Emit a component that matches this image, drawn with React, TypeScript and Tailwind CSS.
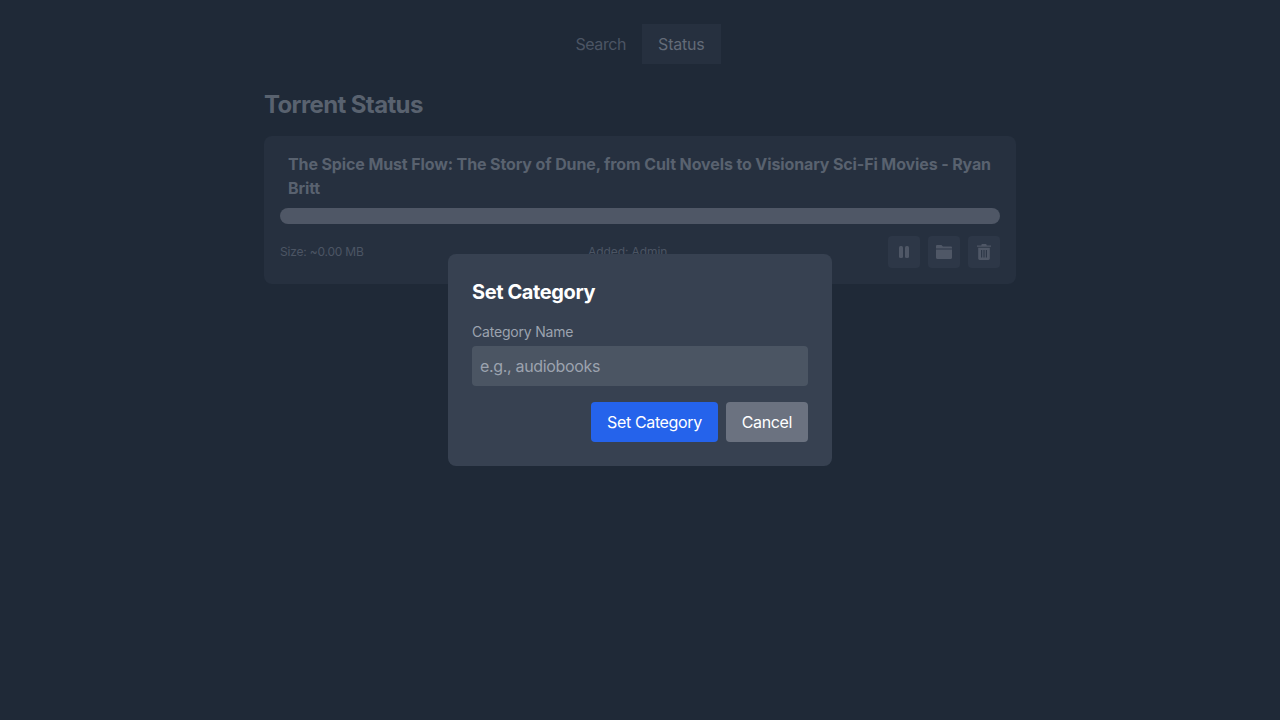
import React from 'react';

const PauseIcon = () => (
  <svg width="16" height="16" viewBox="0 0 16 16" fill="currentColor">
    <rect x="3" y="2" width="4" height="12" rx="1.5" />
    <rect x="9" y="2" width="4" height="12" rx="1.5" />
  </svg>
);

const FolderIcon = () => (
  <svg width="16" height="16" viewBox="0 0 16 16" fill="currentColor">
    <path d="M0 2.2C0 1.5.5 1 1.2 1h4.2l1.6 1.6h7.8c.7 0 1.2.5 1.2 1.2V4.4H0z" />
    <path d="M0 5.4h16v8.4c0 .7-.5 1.2-1.2 1.2H1.2C.5 15 0 14.5 0 13.8z" />
  </svg>
);

const TrashIcon = () => (
  <svg width="16" height="16" viewBox="0 0 16 16" fill="currentColor">
    <path d="M5.8 0h4.4l.6 1.4H15v1.4H1V1.4h4.2z" />
    <path fillRule="evenodd" d="M2.2 3.8h11.6V14.6c0 .8-.6 1.4-1.4 1.4H3.6c-.8 0-1.4-.6-1.4-1.4zM5 6v7.6h1.2V6zm2.4 0v7.6h1.2V6zm2.4 0v7.6H11V6z" />
  </svg>
);

export default function App() {
  return (
    <div className="min-h-screen bg-[#1f2937] font-['Inter',sans-serif]">
      <nav className="flex justify-center pt-6">
        <button className="h-10 px-4 text-base tracking-[-0.4px] text-[#4c5564]">Search</button>
        <button className="h-10 px-4 text-base tracking-[-0.2px] text-[#636b78] bg-[#26303f]">Status</button>
      </nav>

      <main className="w-[752px] mx-auto mt-6">
        <h1 className="text-2xl font-bold tracking-[-0.62px] leading-[34px] text-[#59626f] h-8 mb-4">Torrent Status</h1>

        <div className="bg-[#26303f] rounded-lg p-4">
          <h2 className="px-2 text-base font-bold tracking-[-0.12px] text-[#59626f]">
            The Spice Must Flow: The Story of Dune, from Cult Novels to Visionary Sci-Fi Movies - Ryan Britt
          </h2>
          <div className="h-4 mt-2 rounded-full bg-[#4f5766]" />
          <div className="grid grid-cols-3 items-center mt-3 text-xs text-[#4c5564]">
            <span className="tracking-[-0.2px]">Size: ~0.00 MB</span>
            <span className="ml-[68px] tracking-[-0.08px]">Added: Admin</span>
            <div className="flex justify-end gap-2 text-[#4f5766]">
              <button className="w-8 h-8 flex items-center justify-center rounded bg-[#2d3747]"><PauseIcon /></button>
              <button className="w-8 h-8 flex items-center justify-center rounded bg-[#2d3747]"><FolderIcon /></button>
              <button className="w-8 h-8 flex items-center justify-center rounded bg-[#2d3747]"><TrashIcon /></button>
            </div>
          </div>
        </div>
      </main>

      {/* modal overlay */}
      <div className="fixed inset-0 backdrop-blur-[0.5px] flex items-center justify-center">
        <div className="w-96 bg-[#374151] rounded-lg p-6">
          <h3 className="text-xl font-bold tracking-[-0.4px] text-white mb-4">Set Category</h3>
          <label className="block text-sm tracking-[-0.2px] text-[#9ca3af] mb-1">Category Name</label>
          <input
            readOnly
            placeholder="e.g., audiobooks"
            className="w-full h-10 px-2 rounded bg-[#4b5563] text-base tracking-[-0.33px] text-white placeholder:text-[#9ca3af] outline-none"
          />
          <div className="flex justify-end gap-2 mt-4">
            <button className="h-10 px-4 rounded bg-[#2563eb] text-base tracking-[-0.37px] text-white">Set Category</button>
            <button className="h-10 px-4 rounded bg-[#6b7280] text-base tracking-[-0.37px] text-white">Cancel</button>
          </div>
        </div>
      </div>
    </div>
  );
}
